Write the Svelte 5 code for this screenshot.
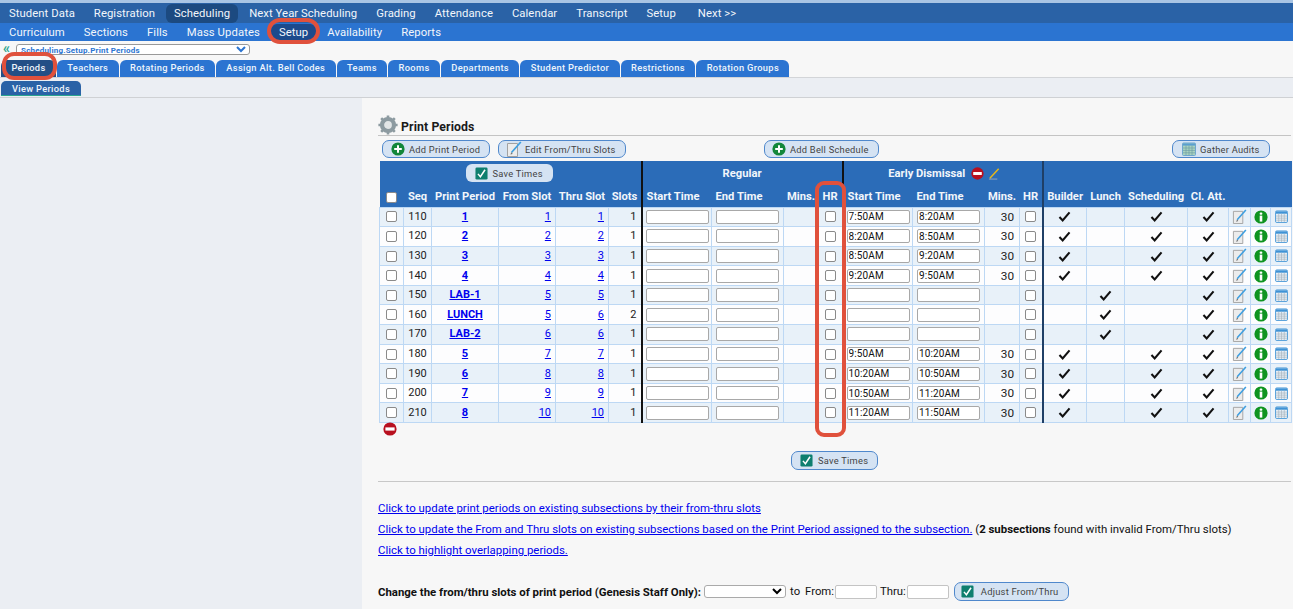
<script>
  const mainNav = ['Student Data','Registration','Scheduling','Next Year Scheduling','Grading','Attendance','Calendar','Transcript','Setup','Next >>'];
  const subNav = ['Curriculum','Sections','Fills','Mass Updates','Setup','Availability','Reports'];
  const tabs = ['Periods','Teachers','Rotating Periods','Assign Alt. Bell Codes','Teams','Rooms','Departments','Student Predictor','Restrictions','Rotation Groups'];
  const rows = [
    [110,'1',1,1,1,'7:50AM','8:20AM',30,1,0,1,1],
    [120,'2',2,2,1,'8:20AM','8:50AM',30,1,0,1,1],
    [130,'3',3,3,1,'8:50AM','9:20AM',30,1,0,1,1],
    [140,'4',4,4,1,'9:20AM','9:50AM',30,1,0,1,1],
    [150,'LAB-1',5,5,1,'','','',0,1,0,1],
    [160,'LUNCH',5,6,2,'','','',0,1,0,1],
    [170,'LAB-2',6,6,1,'','','',0,1,0,1],
    [180,'5',7,7,1,'9:50AM','10:20AM',30,1,0,1,1],
    [190,'6',8,8,1,'10:20AM','10:50AM',30,1,0,1,1],
    [200,'7',9,9,1,'10:50AM','11:20AM',30,1,0,1,1],
    [210,'8',10,10,1,'11:20AM','11:50AM',30,1,0,1,1]
  ];
  const widths = [24,28,67,57,53,33,70,72,35,24,70,72,35,23,44,38,63,41,22,20,21];
</script>

{#snippet plus()}
  <svg class="ico" viewBox="0 0 14 14"><circle cx="7" cy="7" r="6.6" fill="#12873a"/><path d="M7 3.2v7.6M3.2 7h7.6" stroke="#fff" stroke-width="2"/></svg>
{/snippet}
{#snippet note()}
  <svg class="ico nt" viewBox="0 0 16 16"><path d="M1.5 2.5h10v13h-10z" fill="#ececec" stroke="#a2a2a2"/><path d="M5.5 11.5L14.8 1" stroke="#3f9fe0" stroke-width="1.7"/><path d="M5.5 11.5l-.7 1.8 1.7-.7" fill="#666" stroke="#666" stroke-width=".4"/></svg>
{/snippet}
{#snippet cal()}
  <svg class="ico" viewBox="0 0 14 14"><rect x=".5" y="1" width="13" height="12.5" rx="1.5" fill="#e4edf5" stroke="#4b9ad8"/><path d="M1 1.5h12V4H1z" fill="#3f93d6"/><path d="M1 6.5h12M1 8.8h12M1 11h12M4 4v9M7 4v9M10 4v9" stroke="#a7b3bd" stroke-width=".7"/></svg>
{/snippet}
{#snippet calGreen()}
  <svg class="ico" viewBox="0 0 14 14"><rect x=".5" y="1" width="13" height="12.5" rx="1" fill="#a9d3bf" stroke="#6ea7cf"/><path d="M1 1.5h12V3.6H1z" fill="#5a9fd0"/><path d="M1 6h12M1 8.4h12M1 10.8h12M4 3.6v9.6M7 3.6v9.6M10 3.6v9.6" stroke="#6f9fa8" stroke-width=".7"/></svg>
{/snippet}
{#snippet info()}
  <svg class="ico inf" viewBox="0 0 14 14"><circle cx="7" cy="7" r="6.6" fill="#0f9420"/><rect x="5.7" y="2.4" width="2.6" height="2.3" rx=".8" fill="#fff"/><rect x="5.7" y="5.6" width="2.6" height="6" fill="#fff"/></svg>
{/snippet}
{#snippet tick()}
  <svg class="ico tick" viewBox="0 0 14 14"><rect x=".5" y=".5" width="13" height="13" rx="1.5" fill="#0e7f6f"/><path d="M3.2 7.4l2.6 3L10.8 3" fill="none" stroke="#fff" stroke-width="1.6"/></svg>
{/snippet}
{#snippet stop()}
  <svg class="ico" viewBox="0 0 14 14"><circle cx="7" cy="7" r="6.6" fill="#b8101f"/><rect x="2.4" y="5.4" width="9.2" height="3.2" fill="#fff"/></svg>
{/snippet}
{#snippet check()}
  <svg class="chk" viewBox="0 0 14 12"><path d="M1.5 6.5L5 10.2 12.5 1.5" fill="none" stroke="#111" stroke-width="2.3"/></svg>
{/snippet}

<div class="page">
  <div class="topstrip"></div>
  <nav class="mainnav">
    {#each mainNav as n}<span class="mi" class:on={n === 'Scheduling'} class:next={n === 'Next >>'}>{n}</span>{/each}
  </nav>
  <nav class="subnav">
    {#each subNav as n}<span class="si" class:on={n === 'Setup'}>{n}</span>{/each}
  </nav>
  <div class="crumb">
    <span class="chev">«</span>
    <select class="crumbsel"><option>Scheduling.Setup.Print Periods</option></select>
  </div>
  <div class="tabs">
    {#each tabs as t, i}<span class="tab" class:cur={i === 0}>{t}</span>{/each}
  </div>
  <div class="band"><span class="viewtab">View Periods</span></div>

  <div class="body">
    <aside class="side"></aside>
    <main class="main">
      <div class="title">
        <svg class="gear" viewBox="0 0 20 20">
          <circle cx="10" cy="10" r="6" fill="#e2e6e7" stroke="#8d9ba1" stroke-width="4.2"/>
          <path d="M10 .4v3.4M10 16.2v3.4M.4 10h3.4M16.2 10h3.4M3.2 3.2l2.4 2.4M14.4 14.4l2.4 2.4M3.2 16.8l2.4-2.4M14.4 5.6l2.4-2.4" stroke="#8d9ba1" stroke-width="2.6"/>
        </svg>
        <h1>Print Periods</h1>
      </div>
      <div class="btnrow">
        <button class="b add">{@render plus()}Add Print Period</button>
        <button class="b edit">{@render note()}Edit From/Thru Slots</button>
        <button class="b bell">{@render plus()}Add Bell Schedule</button>
        <button class="b gather">{@render calGreen()}Gather Audits</button>
      </div>

      <table>
        <colgroup>{#each widths as w}<col style="width:{w}px" />{/each}</colgroup>
        <thead>
          <tr class="h1">
            <th colspan="6" class="dv"><button class="b save">{@render tick()}Save Times</button></th>
            <th colspan="4" class="dv big">Regular</th>
            <th colspan="4" class="dv2 big early"><span class="ed">Early Dismissal {@render stop()}
              <svg class="ico pen" viewBox="0 0 14 14"><path d="M2 12L11.5 2" stroke="#e8b818" stroke-width="1.6"/><path d="M1 13h9" stroke="#b9b9b9" stroke-width=".8"/></svg></span></th>
            <th colspan="7"></th>
          </tr>
          <tr class="h2">
            <th><input type="checkbox" /></th><th>Seq</th><th>Print Period</th><th>From Slot</th><th>Thru Slot</th><th class="dv">Slots</th>
            <th class="l">Start Time</th><th class="l">End Time</th><th>Mins.</th><th class="dv">HR</th>
            <th class="l">Start Time</th><th class="l">End Time</th><th>Mins.</th><th class="dv2">HR</th>
            <th>Builder</th><th>Lunch</th><th>Scheduling</th><th>Cl. Att.</th><th></th><th></th><th></th>
          </tr>
        </thead>
        <tbody>
          {#each rows as r, i}
            <tr class:odd={i % 2 === 0}>
              <td class="c"><input type="checkbox" /></td>
              <td class="c">{r[0]}</td>
              <td class="c"><a href="#p"><b>{r[1]}</b></a></td>
              <td class="r"><a href="#f">{r[2]}</a></td>
              <td class="r"><a href="#t">{r[3]}</a></td>
              <td class="r dv">{r[4]}</td>
              <td class="c"><input class="tm s" type="text" /></td>
              <td class="c"><input class="tm" type="text" /></td>
              <td class="r"></td>
              <td class="c dv"><input type="checkbox" /></td>
              <td class="c"><input class="tm s" type="text" value={r[5]} /></td>
              <td class="c"><input class="tm" type="text" value={r[6]} /></td>
              <td class="r m">{r[7]}</td>
              <td class="c dv2"><input type="checkbox" /></td>
              <td class="c">{#if r[8]}{@render check()}{/if}</td>
              <td class="c">{#if r[9]}{@render check()}{/if}</td>
              <td class="c">{#if r[10]}{@render check()}{/if}</td>
              <td class="c">{#if r[11]}{@render check()}{/if}</td>
              <td class="c">{@render note()}</td>
              <td class="c">{@render info()}</td>
              <td class="c">{@render cal()}</td>
            </tr>
          {/each}
        </tbody>
      </table>
      <div class="rowstop">{@render stop()}</div>
      <div class="savebottom"><button class="b save2">{@render tick()}Save Times</button></div>
      <hr />
      <p class="lk"><a href="#a">Click to update print periods on existing subsections by their from-thru slots</a></p>
      <p class="lk"><a href="#b">Click to update the From and Thru slots on existing subsections based on the Print Period assigned to the subsection.</a> (<b>2 subsections</b> found with invalid From/Thru slots)</p>
      <p class="lk"><a href="#c">Click to highlight overlapping periods.</a></p>
      <div class="change">
        <b>Change the from/thru slots of print period (Genesis Staff Only):</b>
        <select class="csel"><option></option></select>
        <span class="to">to</span>
        <span class="from">From:</span><input class="slot" type="text" />
        <span class="thru">Thru:</span><input class="slot" type="text" />
        <button class="b adj">{@render tick()}Adjust From/Thru</button>
      </div>
    </main>
  </div>

  <div class="mark m1"></div>
  <div class="mark m2"></div>
  <div class="mark m3"></div>
</div>

<style>
  :global(body) { margin: 0; background: #f7f7f7; }
  .page { position: relative; width: 1293px; height: 609px; overflow: hidden; font-family: Roboto, "Liberation Sans", sans-serif; font-size: 11px; color: #111; }
  .topstrip { height: 3px; background: #a9c5e4; }
  .mainnav { height: 20px; background: #2a62a6; display: flex; align-items: center; padding-left: 9px; gap: 19px; color: #f2f6fb; font-size: 11.3px; letter-spacing: .06px; }
  .mi.on { background: #1c4a80; border-radius: 6px; padding: 3px 8px; margin: 0 -8px; }
  .mi.next { margin-left: 3px; }
  .subnav { height: 18px; background: #2b74d1; display: flex; align-items: center; padding-left: 9px; gap: 19px; color: #f2f6fb; font-size: 11.3px; letter-spacing: .08px; }
  .si.on { background: #1c4a8c; border-radius: 6px; padding: 2px 8px; margin: 0 -8px; }
  .crumb { height: 16px; background: #f7f7f7; display: flex; align-items: flex-start; padding: 3px 0 0 3px; box-sizing: border-box; gap: 2px; }
  .chev { color: #2aa58c; font-size: 14px; line-height: 9px; font-weight: 700; width: 11px; }
  .crumbsel { width: 234px; height: 11px; padding: 0; border: 1px solid #999; border-radius: 3px; background: #fff; color: #2b74d1; font: 700 8px Roboto, sans-serif; letter-spacing: .2px; }
  .tabs { height: 21px; box-sizing: border-box; padding: 3px 0 0 1px; background: #f7f7f7; border-bottom: 1px solid #d3d5d8; display: flex; gap: 1px; }
  .tab { height: 17px; box-sizing: border-box; padding: 2px 10.4px 0; background: #2b74d1; color: #eef4fb; border-radius: 6px 6px 0 0; font-size: 9.3px; font-weight: 500; letter-spacing: .33px; white-space: nowrap; }
  .tab.cur { background: #234f86; }
  .band { height: 20px; background: #ebeef3; border-bottom: 1px solid #cfd1d4; padding: 3px 0 0 1px; box-sizing: border-box; }
  .viewtab { display: inline-block; width: 80px; height: 15px; box-sizing: border-box; padding-top: 2px; text-align: center; background: #2a62a6; color: #eef4fb; border-radius: 5px 5px 0 0; border-bottom: 1px solid #2ba58f; font-size: 9.3px; font-weight: 500; letter-spacing: .3px; }
  .body { display: flex; height: 511px; }
  .side { width: 362px; background: #ebeef3; }
  .main { flex: 1; background: #f7f7f7; padding: 16px 2px 0 16px; box-sizing: border-box; min-width: 0; }
  .title { height: 22px; display: flex; align-items: center; border-bottom: 1px solid #c4c4c4; gap: 3px; box-sizing: border-box; }
  .gear { width: 20px; height: 20px; flex: none; }
  h1 { margin: 5px 0 0; font-size: 12.3px; font-weight: 700; letter-spacing: .1px; color: #1a1a1a; }
  .btnrow { display: flex; margin: 4px 0 3px 4px; height: 18px; }
  .b { display: inline-flex; align-items: center; box-sizing: border-box; height: 18px; padding: 0; border: 1px solid #4f88cc; border-radius: 7px; background: #d5e3f3; color: #444; font: 400 9.3px Roboto, sans-serif; letter-spacing: .25px; white-space: nowrap; }
  .ico { width: 14px; height: 14px; flex: none; }
  .b .nt { width: 16px; height: 16px; }
  .add { width: 108px; padding-left: 8px; gap: 4px; }
  .edit { width: 128px; margin-left: 8px; padding-left: 7px; gap: 3px; }
  .bell { width: 115px; margin-left: 138px; padding-left: 7px; gap: 4px; }
  .gather { width: 98px; margin-left: 293px; padding-left: 9px; gap: 4px; }
  table { border-collapse: collapse; table-layout: fixed; width: 912px; margin-left: 1px; }
  th { background: #2b6cb8; color: #f2f6fb; font-size: 11.2px; font-weight: 700; padding: 0; text-align: center; white-space: nowrap; overflow: visible; }
  th.l { text-align: left; padding-left: 4px; }
  .h1 th { height: 23px; padding-top: 2px; box-sizing: border-box; }
  .h2 th { height: 23px; padding-top: 3px; box-sizing: border-box; }
  .big { font-size: 11.2px; }
  .h1 th.early { padding-left: 4px; }
  .dv { border-right: 2px solid #111; }
  .dv2 { border-right: 2px solid #1f3f66; }
  .save { width: 87px; height: 18px; padding-left: 9px; gap: 5px; border: none; border-radius: 6px; margin: 0 0 0 -2px; }
  .tick { width: 13px; height: 13px; }
  .ed { display: inline-flex; align-items: center; gap: 3px; white-space: pre; }
  .ed .ico { width: 13px; height: 13px; }
  .pen { margin-left: 1px; }
  td { height: 19.6px; padding: 0; box-sizing: border-box; border: 1px solid #bdd8f4; background: #fdfdfe; font-size: 11px; color: #222; vertical-align: middle; line-height: 12px; }
  tr.odd td { background: #e8f1f9; }
  td.dv { border-right: 2px solid #111; }
  td.dv2 { border-right: 2px solid #1f3f66; }
  td.c { text-align: center; }
  td.r { text-align: right; padding-right: 4px; }
  td.m { padding-right: 5px; font-size: 11.8px; }
  a { color: #0000ee; text-decoration: underline; }
  input[type="checkbox"] { appearance: none; box-sizing: border-box; width: 11px; height: 11px; margin: 0; vertical-align: middle; background: #fff; border: 1px solid #8a8a8a; border-radius: 2px; }
  .tm { display: block; margin: 0 auto; width: 63px; height: 14px; box-sizing: border-box; padding: 0 1px; border: 1px solid #a8a8a8; border-radius: 2px; background: #fff; font: 400 10px Roboto, sans-serif; color: #111; letter-spacing: .1px; }
  .tm.s { margin: 0 0 0 3px; }
  .chk { width: 13px; height: 11px; display: inline-block; vertical-align: middle; }
  td .ico { vertical-align: middle; width: 13px; height: 13px; }
  td .nt { width: 15px; height: 15px; }
  td .inf { width: 14px; height: 14px; }
  .rowstop { margin-top: -1px; height: 13px; }
  .rowstop .ico { display: block; margin-left: 5px; width: 14px; height: 14px; }
  .savebottom { display: flex; justify-content: center; margin-top: 16px; }
  .save2 { width: 87px; height: 19px; padding-left: 8px; gap: 5px; }
  hr { border: none; border-top: 1px solid #c8c8c8; margin: 11px 0 0; }
  .lk { margin: 0; font-size: 11.42px; line-height: 21px; white-space: nowrap; }
  .lk:first-of-type { margin-top: 16px; }
  .change { display: flex; align-items: center; margin-top: 21px; height: 19px; font-size: 11.41px; color: #111; white-space: nowrap; }
  .csel { width: 82px; height: 13px; margin-left: 3px; padding: 0; border: 1px solid #aaa; border-radius: 3px; background: #fff; font-size: 8px; }
  .to { margin-left: 4px; font-size: 11.3px; }
  .from { margin-left: 5px; font-size: 11.3px; }
  .thru { margin-left: 3px; font-size: 11.3px; }
  .slot { width: 42px; height: 14px; box-sizing: border-box; border: 1px solid #c4c4c4; border-radius: 2px; background: #fff; padding: 0; margin-left: 1px; }
  .adj { width: 115px; height: 19px; margin-left: 5px; padding-left: 6px; gap: 7px; font-size: 9.4px; }
  .mark { position: absolute; border: 4px solid #e0513c; box-sizing: border-box; pointer-events: none; }
  .m1 { left: 267px; top: 18px; width: 53px; height: 26px; border-radius: 13px; }
  .m2 { left: 2px; top: 52px; width: 55px; height: 28px; border-radius: 12px; }
  .m3 { left: 815px; top: 181px; width: 31px; height: 256px; border-radius: 9px; }
</style>
